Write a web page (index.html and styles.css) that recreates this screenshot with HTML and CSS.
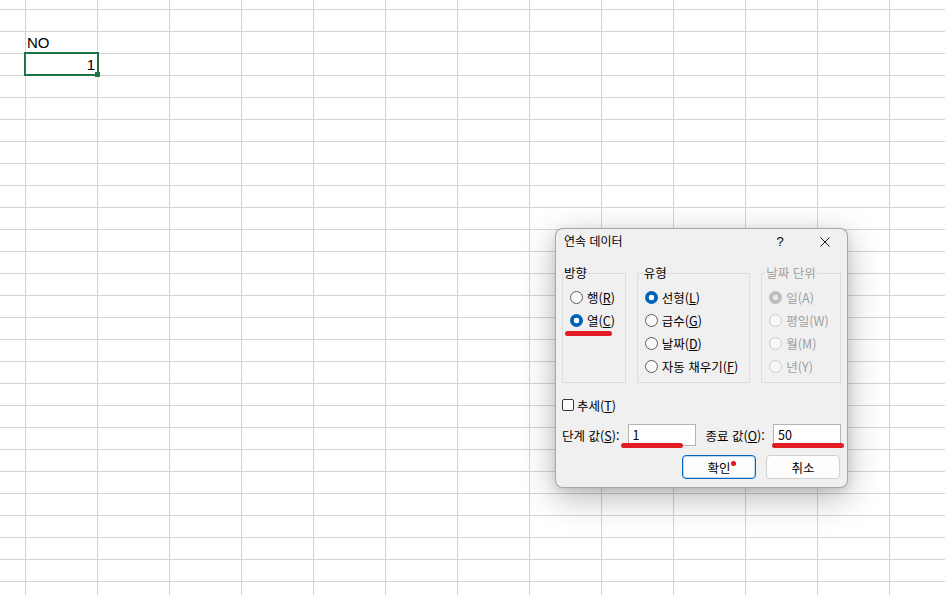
FILE: index.html
```html
<!DOCTYPE html>
<html lang="ko">
<head>
<meta charset="utf-8">
<title>연속 데이터</title>
<link rel="stylesheet" href="styles.css">
</head>
<body>
<div class="sheet">
  <div class="cells">
    <div class="cell r2">NO</div>
    <div class="cell r3 num selected">1<span class="sel"></span><span class="handle"></span></div>
  </div>
</div>

<div class="dialog">
  <div class="titlebar">
    <div class="title">연속 데이터</div>
    <div class="tb-btn help">?</div>
    <div class="tb-btn close">
      <svg width="10" height="10" viewBox="0 0 10 10"><path d="M0.5 0.5L9.5 9.5M9.5 0.5L0.5 9.5" stroke="#1a1a1a" stroke-width="1" fill="none"/></svg>
    </div>
  </div>
  <div class="body">
    <div class="groups">
      <fieldset class="group g1">
        <legend>방향</legend>
        <label class="opt"><span class="radio"></span><span>행(<u>R</u>)</span></label>
        <label class="opt"><span class="radio checked"></span><span>열(<u>C</u>)</span></label>
      </fieldset>
      <fieldset class="group g2">
        <legend>유형</legend>
        <label class="opt"><span class="radio checked"></span><span>선형(<u>L</u>)</span></label>
        <label class="opt"><span class="radio"></span><span>급수(<u>G</u>)</span></label>
        <label class="opt"><span class="radio"></span><span>날짜(<u>D</u>)</span></label>
        <label class="opt"><span class="radio"></span><span>자동 채우기(<u>F</u>)</span></label>
      </fieldset>
      <fieldset class="group g3 disabled">
        <legend>날짜 단위</legend>
        <label class="opt"><span class="radio checked"></span><span>일(A)</span></label>
        <label class="opt"><span class="radio"></span><span>평일(W)</span></label>
        <label class="opt"><span class="radio"></span><span>월(M)</span></label>
        <label class="opt"><span class="radio"></span><span>년(Y)</span></label>
      </fieldset>
    </div>
    <label class="check-row"><span class="checkbox"></span><span>추세(<u>T</u>)</span></label>
    <div class="values">
      <span class="vlabel l1">단계 값(<u>S</u>):</span>
      <input class="field" type="text" value="1" readonly>
      <span class="vlabel l2">종료 값(<u>O</u>):</span>
      <input class="field" type="text" value="50" readonly>
    </div>
    <div class="buttons">
      <div class="btn primary">확인<span class="dot"></span></div>
      <div class="btn">취소</div>
    </div>
  </div>
  <span class="mark m1"></span>
  <span class="mark m2"></span>
  <span class="mark m3"></span>
</div>
</body>
</html>
```

FILE: styles.css
```css
* {
  box-sizing: border-box;
}

body {
  margin: 0;
  width: 945px;
  height: 595px;
  overflow: hidden;
  background: #fff;
  font-family: "Noto Sans CJK KR", "Noto Sans", sans-serif;
}

.sheet {
  width: 945px;
  height: 595px;
  background-color: #fff;
  background-image:
    linear-gradient(to right, #d4d4d4 1px, transparent 1px),
    linear-gradient(to bottom, #d4d4d4 1px, transparent 1px);
  background-size: 72px 22px;
  background-position: 25px 9px;
}

.cells {
  display: grid;
  grid-template-columns: repeat(13, 72px);
  grid-auto-rows: 22px;
  padding: 9px 0 0 25px;
  font-family: "Liberation Sans", Arial, sans-serif;
  font-size: 15px;
  color: #000;
}

.cell {
  grid-column: 1;
  padding: 1px 2px 0 2px;
  line-height: 22px;
  white-space: nowrap;
}

.r2 { grid-row: 2; }
.r3 { grid-row: 3; }

.num {
  text-align: right;
  padding-right: 2px;
}

.selected {
  position: relative;
}

.sel {
  position: absolute;
  left: -1px;
  top: -1px;
  width: 75px;
  height: 24px;
  border: 2px solid #217346;
}

.handle {
  position: absolute;
  left: 70px;
  top: 19px;
  width: 5px;
  height: 5px;
  background: #217346;
}

/* dialog */
.dialog {
  position: absolute;
  left: 555px;
  top: 228px;
  width: 293px;
  height: 260px;
  background: #f0f0f0;
  border: 1px solid rgba(0, 0, 0, 0.3);
  border-radius: 8px;
  box-shadow: 0 10px 34px rgba(0, 0, 0, 0.28), 0 2px 8px rgba(0, 0, 0, 0.1);
  font-size: 12.5px;
  color: #000;
  display: flex;
  flex-direction: column;
}

.titlebar {
  display: flex;
  align-items: center;
  height: 24px;
  padding: 0 7px 0 8px;
}

.title {
  flex: 1;
  font-size: 12px;
  line-height: 24px;
}

.tb-btn {
  width: 30px;
  height: 24px;
  display: flex;
  align-items: center;
  justify-content: center;
}

.help {
  font-family: "Liberation Sans", Arial, sans-serif;
  font-size: 13px;
  padding-top: 1px;
  margin-right: 15px;
}

.close svg {
  display: block;
  margin-top: 2px;
}

.body {
  flex: 1;
  display: flex;
  flex-direction: column;
  padding: 12px 6px 10px 6px;
}

.groups {
  display: flex;
  gap: 11px;
}

.group {
  margin: 0;
  padding: 5px 0 4px 7px;
  border: 1px solid #dcdcdc;
  min-width: 0;
}

.group legend {
  padding: 0 1px;
  line-height: 16px;
}

.g1 { width: 64px; }
.g1 legend { margin-left: -7px; }
.g2 { width: 114px; }
.g2 legend { margin-left: -2px; }
.g3 { width: 80px; }
.g3 legend { margin-left: -4px; }

.opt {
  display: flex;
  align-items: center;
  gap: 4px;
  height: 23px;
  white-space: nowrap;
}

u {
  text-underline-offset: 1px;
}

.radio {
  flex: none;
  width: 13px;
  height: 13px;
  border-radius: 50%;
  border: 1px solid #5c5c5c;
  background: #f9f9f9;
}

.radio.checked {
  border: none;
  background: radial-gradient(circle, #fff 0 2.6px, #0063b8 3.1px);
}

.disabled {
  color: #a0a0a0;
}

.disabled .radio {
  border-color: #cbcbcb;
  background: #f6f6f6;
}

.disabled .radio.checked {
  border: none;
  background: radial-gradient(circle, #e9e9e9 0 2.6px, #bdbdbd 3.1px);
}

.check-row {
  display: flex;
  align-items: center;
  gap: 3px;
  height: 20px;
  margin-top: 12px;
}

.checkbox {
  width: 12px;
  height: 12px;
  border: 1px solid #333;
  border-radius: 2px;
  background: #fff;
}

.values {
  display: flex;
  align-items: center;
  height: 22px;
  margin-top: 9px;
}

.vlabel {
  white-space: nowrap;
}

.l1 { width: 66px; }
.l2 { width: 68px; margin-left: 10px; }

.field {
  width: 68px;
  height: 22px;
  margin: 0;
  padding: 0 0 1px 4px;
  border: 1px solid #b4b4b4;
  border-radius: 0;
  background: #fff;
  font-family: "Noto Sans CJK KR", "Noto Sans", sans-serif;
  font-size: 12.5px;
  color: #000;
  outline: none;
}

.buttons {
  display: flex;
  justify-content: flex-end;
  gap: 10px;
  margin-top: 9px;
  padding-right: 1px;
}

.btn {
  position: relative;
  width: 74px;
  height: 24px;
  display: flex;
  align-items: center;
  justify-content: center;
  background: #fdfdfd;
  border: 1px solid #d0d0d0;
  border-radius: 4px;
}

.btn.primary {
  border-color: #0067c0;
  box-shadow: inset 0 0 0 1px rgba(0, 103, 192, 0.25);
}

.dot {
  position: absolute;
  left: 48px;
  top: 5px;
  width: 5px;
  height: 5px;
  border-radius: 50%;
  background: #e3141b;
}

.mark {
  position: absolute;
  height: 5px;
  border-radius: 3px;
  background: #e31b23;
}

.m1 { left: 9px; top: 102px; width: 47px; }
.m2 { left: 65px; top: 214px; width: 62px; }
.m3 { left: 216px; top: 214px; width: 72px; }
```
